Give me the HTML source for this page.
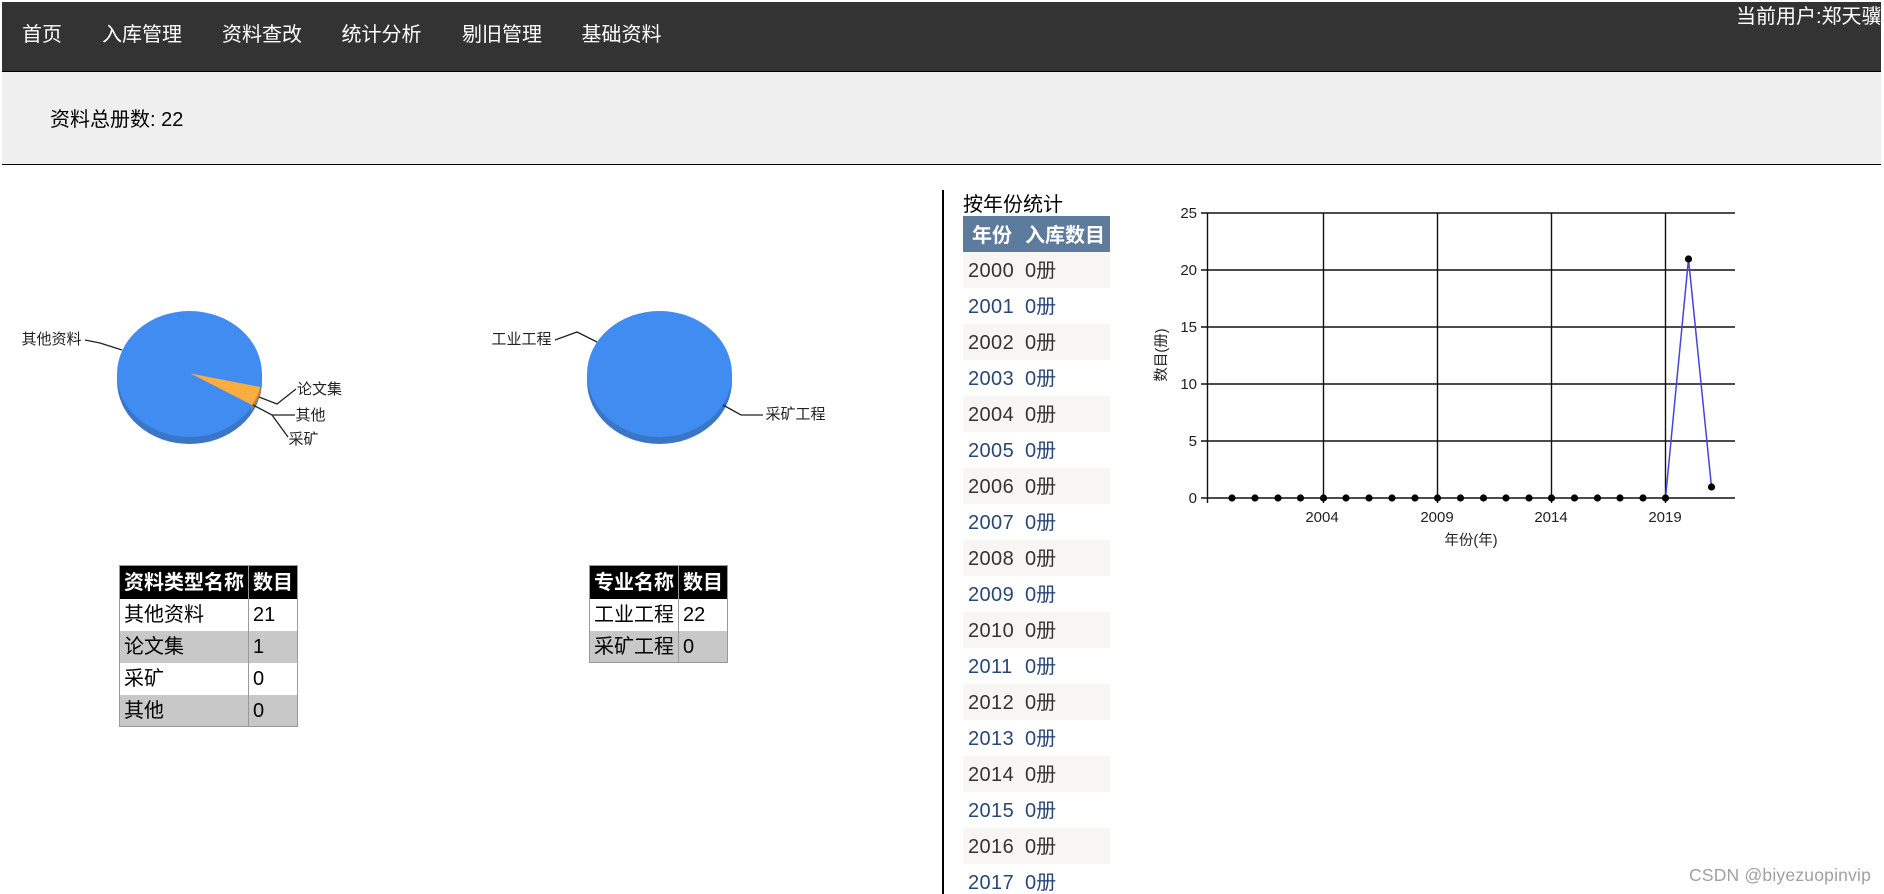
<!DOCTYPE html>
<html lang="zh-CN">
<head>
<meta charset="utf-8">
<title>统计分析</title>
<style>
html,body{margin:0;padding:0;width:1884px;height:894px;overflow:hidden;background:#fff}
body{position:relative;font-family:"Liberation Sans","Noto Sans CJK SC",sans-serif;font-size:20px;color:#000}
.a{position:absolute}
.t{position:absolute;white-space:nowrap;line-height:32px;height:32px}
#head{left:2px;top:2px;width:1879px;height:69px;background:#333;border-bottom:1px solid #000}
#sub{left:2px;top:72px;width:1879px;height:92px;background:#efefef;border-bottom:1px solid #000}
.n{color:#fff;top:19px}
.u{color:#fff;top:1px}
.yr{position:absolute;left:963px;width:147px;height:36px;line-height:38px;white-space:nowrap}
.yr span{position:absolute;top:0}
.yr .c1{left:5px;letter-spacing:.4px}
.yr .c2{left:62px}
.o{background:#f7f6f3;color:#333}
.e{background:#fff;color:#284775}
.g{position:absolute;background:#fff;box-sizing:border-box;border:1px solid #999;overflow:hidden}
.g div{position:absolute;white-space:nowrap;line-height:33px;height:32px}
.hd{background:#000;color:#fff;font-weight:bold}
.bar{background:#c8c8c8}
svg{position:absolute;left:0;top:0}
svg text{font-family:"Liberation Sans","Noto Sans CJK SC",sans-serif;fill:#222}
</style>
</head>
<body>
<div class="a" id="head"></div>
<div class="t n" style="left:22px">首页</div>
<div class="t n" style="left:102px">入库管理</div>
<div class="t n" style="left:222px">资料查改</div>
<div class="t n" style="left:341.5px">统计分析</div>
<div class="t n" style="left:462px">剔旧管理</div>
<div class="t n" style="left:581.5px">基础资料</div>
<div class="t u" style="left:1736px;width:145px;overflow:hidden">当前用户:郑天骥</div>
<div class="a" id="sub"></div>
<div class="t" style="left:50px;top:104px">资料总册数: 22</div>

<svg width="1884" height="894" viewBox="0 0 1884 894">
  <!-- pie 1 -->
  <ellipse cx="189.5" cy="381" rx="72.5" ry="63" fill="#3a76c8"/>
  <rect x="117" y="374" width="145" height="7" fill="#3a76c8"/>
  <ellipse cx="189.5" cy="374" rx="72.5" ry="63" fill="#418cf0"/>
  <path d="M190.5 373.5 L260.5 387 Q258 397 252 405 Z" fill="#f9ae3f"/>
  <path d="M260.5 387 Q258 397 252 405 L251 411 Q258 402 261 393 Z" fill="#b98432"/>
  <g fill="none" stroke="#222" stroke-width="1.3">
    <path d="M85 340 L100 343 L122 350"/>
    <path d="M259 397 L277 404 L296 389"/>
    <path d="M253 405 L272 415 L295 415"/>
    <path d="M272 415 L288 437"/>
  </g>
  <g font-size="15">
    <text x="21.5" y="344">其他资料</text>
    <text x="297" y="394">论文集</text>
    <text x="295.5" y="420">其他</text>
    <text x="288.5" y="444">采矿</text>
  </g>
  <!-- pie 2 -->
  <ellipse cx="659.5" cy="381" rx="72.5" ry="63" fill="#3a76c8"/>
  <rect x="587" y="374" width="145" height="7" fill="#3a76c8"/>
  <ellipse cx="659.5" cy="374" rx="72.5" ry="63" fill="#418cf0"/>
  <g fill="none" stroke="#222" stroke-width="1.3">
    <path d="M555 340 L577 332 L597 342"/>
    <path d="M723 405 L741 415 L763 415"/>
  </g>
  <g font-size="15">
    <text x="491.5" y="344">工业工程</text>
    <text x="765.5" y="419">采矿工程</text>
  </g>

  <!-- divider -->
  <rect x="942" y="190" width="2" height="704" fill="#000"/>

  <!-- line chart -->
  <g stroke="#111" stroke-width="1.4" fill="none">
    <path d="M1201 213H1735M1201 270H1735M1201 327H1735M1201 384H1735M1201 441H1735M1201 498H1735"/>
    <path d="M1207.5 213V503M1323.5 213V503M1437.5 213V503M1551.5 213V503M1665.5 213V503"/>
  </g>
  <path d="M1665.5 498 L1688.5 259 L1711.5 487" fill="none" stroke="#4545dd" stroke-width="1.5"/>
  <g fill="#000">
    <circle cx="1232" cy="498" r="3.6"/><circle cx="1255" cy="498" r="3.6"/><circle cx="1278" cy="498" r="3.6"/><circle cx="1300.5" cy="498" r="3.6"/><circle cx="1323.5" cy="498" r="3.6"/>
    <circle cx="1346" cy="498" r="3.6"/><circle cx="1369" cy="498" r="3.6"/><circle cx="1392" cy="498" r="3.6"/><circle cx="1415" cy="498" r="3.6"/><circle cx="1437.5" cy="498" r="3.6"/>
    <circle cx="1460.5" cy="498" r="3.6"/><circle cx="1483.5" cy="498" r="3.6"/><circle cx="1506" cy="498" r="3.6"/><circle cx="1529" cy="498" r="3.6"/><circle cx="1551.5" cy="498" r="3.6"/>
    <circle cx="1574.5" cy="498" r="3.6"/><circle cx="1597.5" cy="498" r="3.6"/><circle cx="1620" cy="498" r="3.6"/><circle cx="1643" cy="498" r="3.6"/><circle cx="1665.5" cy="498" r="3.6"/>
    <circle cx="1688.5" cy="259" r="3.6"/><circle cx="1711.5" cy="487" r="3.6"/>
  </g>
  <g font-size="15" text-anchor="end">
    <text x="1197" y="218">25</text>
    <text x="1197" y="275">20</text>
    <text x="1197" y="332">15</text>
    <text x="1197" y="389">10</text>
    <text x="1197" y="446">5</text>
    <text x="1197" y="503">0</text>
  </g>
  <g font-size="15" text-anchor="middle">
    <text x="1322" y="522">2004</text>
    <text x="1437" y="522">2009</text>
    <text x="1551" y="522">2014</text>
    <text x="1665" y="522">2019</text>
  </g>
  <text x="1471" y="545" font-size="14.5" text-anchor="middle">年份(年)</text>
  <text transform="translate(1166 355) rotate(-90)" font-size="14.5" text-anchor="middle">数目(册)</text>
</svg>

<!-- left table -->
<div class="g" style="left:119px;top:565px;width:179px;height:162px">
  <div class="hd" style="left:0;top:0;width:177px;height:33px"></div>
  <div class="bar" style="left:0;top:65px;width:177px"></div>
  <div class="bar" style="left:0;top:129px;width:177px"></div>
  <div style="left:128px;top:0;width:1px;height:162px;background:#999"></div>
  <div class="hd" style="left:4px;top:1px">资料类型名称</div>
  <div class="hd" style="left:133px;top:1px">数目</div>
  <div style="left:4px;top:33px">其他资料</div><div style="left:133px;top:33px">21</div>
  <div style="left:4px;top:65px">论文集</div><div style="left:133px;top:65px">1</div>
  <div style="left:4px;top:97px">采矿</div><div style="left:133px;top:97px">0</div>
  <div style="left:4px;top:129px">其他</div><div style="left:133px;top:129px">0</div>
</div>

<!-- right table -->
<div class="g" style="left:589px;top:565px;width:139px;height:98px">
  <div class="hd" style="left:0;top:0;width:137px;height:33px"></div>
  <div class="bar" style="left:0;top:65px;width:137px"></div>
  <div style="left:88px;top:0;width:1px;height:98px;background:#999"></div>
  <div class="hd" style="left:4px;top:1px">专业名称</div>
  <div class="hd" style="left:93px;top:1px">数目</div>
  <div style="left:4px;top:33px">工业工程</div><div style="left:93px;top:33px">22</div>
  <div style="left:4px;top:65px">采矿工程</div><div style="left:93px;top:65px">0</div>
</div>

<!-- year table -->
<div class="t" style="left:963px;top:189px">按年份统计</div>
<div class="yr" style="top:216px;background:#5d7b9d;color:#fff;font-weight:bold;line-height:40px">
  <span style="left:9px">年份</span><span style="left:62px">入库数目</span>
</div>
<div class="yr o" style="top:252px"><span class="c1">2000</span><span class="c2">0册</span></div>
<div class="yr e" style="top:288px"><span class="c1">2001</span><span class="c2">0册</span></div>
<div class="yr o" style="top:324px"><span class="c1">2002</span><span class="c2">0册</span></div>
<div class="yr e" style="top:360px"><span class="c1">2003</span><span class="c2">0册</span></div>
<div class="yr o" style="top:396px"><span class="c1">2004</span><span class="c2">0册</span></div>
<div class="yr e" style="top:432px"><span class="c1">2005</span><span class="c2">0册</span></div>
<div class="yr o" style="top:468px"><span class="c1">2006</span><span class="c2">0册</span></div>
<div class="yr e" style="top:504px"><span class="c1">2007</span><span class="c2">0册</span></div>
<div class="yr o" style="top:540px"><span class="c1">2008</span><span class="c2">0册</span></div>
<div class="yr e" style="top:576px"><span class="c1">2009</span><span class="c2">0册</span></div>
<div class="yr o" style="top:612px"><span class="c1">2010</span><span class="c2">0册</span></div>
<div class="yr e" style="top:648px"><span class="c1">2011</span><span class="c2">0册</span></div>
<div class="yr o" style="top:684px"><span class="c1">2012</span><span class="c2">0册</span></div>
<div class="yr e" style="top:720px"><span class="c1">2013</span><span class="c2">0册</span></div>
<div class="yr o" style="top:756px"><span class="c1">2014</span><span class="c2">0册</span></div>
<div class="yr e" style="top:792px"><span class="c1">2015</span><span class="c2">0册</span></div>
<div class="yr o" style="top:828px"><span class="c1">2016</span><span class="c2">0册</span></div>
<div class="yr e" style="top:864px"><span class="c1">2017</span><span class="c2">0册</span></div>

<div class="t" style="left:1689px;top:859px;font-size:17.5px;letter-spacing:.2px;color:#a0a0a0">CSDN @biyezuopinvip</div>
</body>
</html>
